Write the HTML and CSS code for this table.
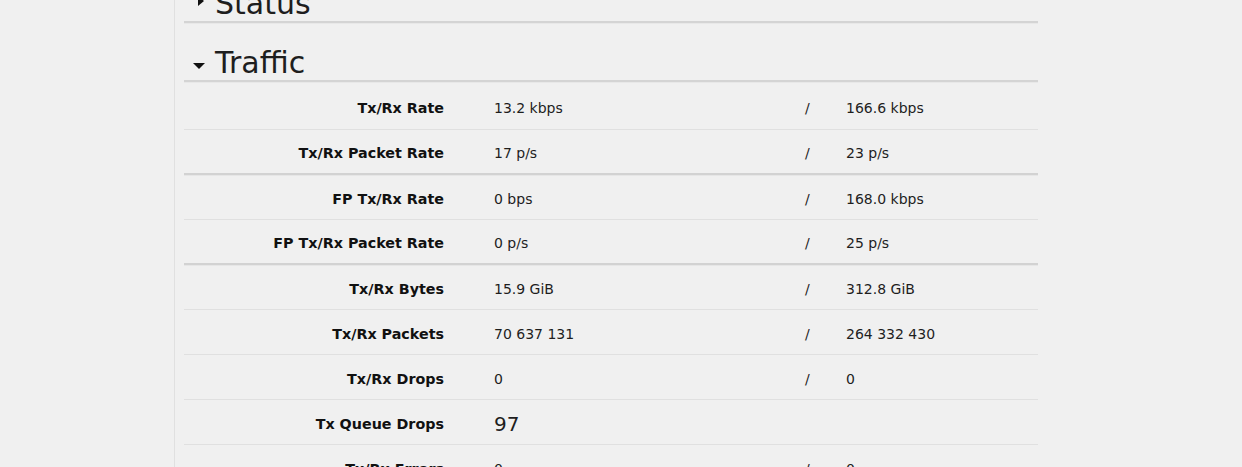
FILE: index.html
```html
<!DOCTYPE html>
<html>
<head>
<meta charset="utf-8">
<link rel="stylesheet" href="styles.css">
</head>
<body>
<div class="page">
  <div class="sidebar"></div>
  <div class="main">
    <div class="sec-head">
      <span class="arrow arrow-right"></span>
      <span class="sec-title">Status</span>
    </div>
    <div class="sec-head">
      <span class="arrow arrow-down"></span>
      <span class="sec-title">Traffic</span>
    </div>
    <div class="rows">
      <div class="row">
        <div class="lbl">Tx/Rx Rate</div><div class="v1">13.2 kbps</div><div class="sl">/</div><div class="v2">166.6 kbps</div>
      </div>
      <div class="row group-end">
        <div class="lbl">Tx/Rx Packet Rate</div><div class="v1">17 p/s</div><div class="sl">/</div><div class="v2">23 p/s</div>
      </div>
      <div class="row">
        <div class="lbl">FP Tx/Rx Rate</div><div class="v1">0 bps</div><div class="sl">/</div><div class="v2">168.0 kbps</div>
      </div>
      <div class="row group-end">
        <div class="lbl">FP Tx/Rx Packet Rate</div><div class="v1">0 p/s</div><div class="sl">/</div><div class="v2">25 p/s</div>
      </div>
      <div class="row">
        <div class="lbl">Tx/Rx Bytes</div><div class="v1">15.9 GiB</div><div class="sl">/</div><div class="v2">312.8 GiB</div>
      </div>
      <div class="row">
        <div class="lbl">Tx/Rx Packets</div><div class="v1">70 637 131</div><div class="sl">/</div><div class="v2">264 332 430</div>
      </div>
      <div class="row">
        <div class="lbl">Tx/Rx Drops</div><div class="v1">0</div><div class="sl">/</div><div class="v2">0</div>
      </div>
      <div class="row">
        <div class="lbl">Tx Queue Drops</div><div class="v1 big">97</div><div class="sl"></div><div class="v2"></div>
      </div>
      <div class="row">
        <div class="lbl">Tx/Rx Errors</div><div class="v1">0</div><div class="sl">/</div><div class="v2">0</div>
      </div>
    </div>
  </div>
</div>
</body>
</html>
```

FILE: styles.css
```css
html, body {
  margin: 0;
  padding: 0;
  background: #f0f0f0;
  height: 100%;
  overflow: hidden;
}
body {
  font-family: "DejaVu Sans", Verdana, sans-serif;
  color: #1e1e1e;
}
.page {
  display: flex;
  min-height: 100%;
}
.sidebar {
  width: 174px;
  flex: none;
  border-right: 1px solid #e0e0e0;
}
.main {
  width: 854px;
  margin-left: 9px;
  margin-top: -36px;
}
.sec-head {
  display: flex;
  align-items: center;
  padding-top: 23px;
  height: 34px;
  border-bottom: 2px solid #d4d4d4;
  box-shadow: 0 1px 0 #e8e8e8;
}
.sec-title {
  font-size: 30px;
  line-height: 34px;
  color: #1e1e1e;
}
.arrow {
  width: 0;
  height: 0;
  flex: none;
}
.arrow-down {
  margin-left: 9px;
  margin-right: 10px;
  margin-top: 5px;
  border-left: 6px solid transparent;
  border-right: 6px solid transparent;
  border-top: 6px solid #111;
}
.arrow-right {
  margin-left: 14px;
  margin-right: 11px;
  margin-top: -6px;
  border-top: 5px solid transparent;
  border-bottom: 5px solid transparent;
  border-left: 6px solid #111;
}
.rows {
  margin-top: 1px;
}
.row {
  display: grid;
  grid-template-columns: 260px 361px 41px 1fr;
  align-items: center;
  box-sizing: border-box;
  height: 47px;
  padding-top: 4px;
  border-bottom: 1px solid #e0e0e0;
  font-size: 14px;
}
.row + .row {
  height: 45px;
  padding-top: 3px;
}
.row.group-end {
  border-bottom: 2px solid #d2d2d2;
  box-shadow: 0 1px 0 #e6e6e6;
}
.lbl {
  text-align: right;
  font-weight: bold;
  font-size: 14.3px;
  color: #111;
}
.v1 {
  padding-left: 50px;
}
.v1.big {
  font-size: 20px;
}
.sl, .v2 {
  color: #1e1e1e;
}
```
